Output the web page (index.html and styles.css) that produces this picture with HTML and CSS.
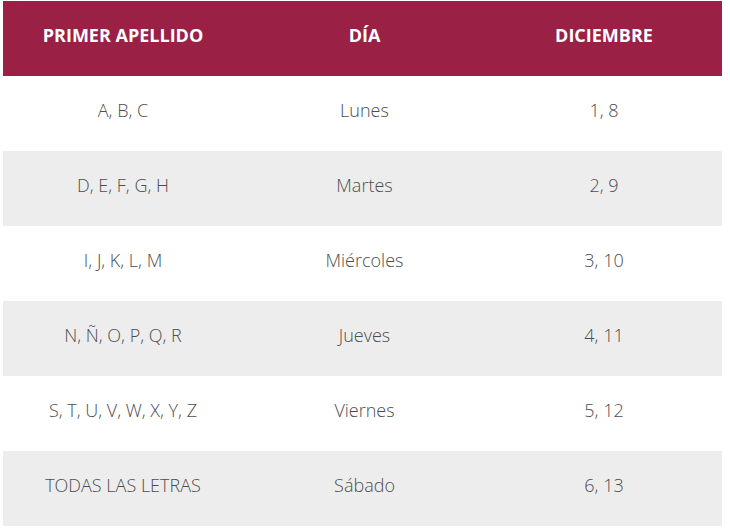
FILE: index.html
```html
<!DOCTYPE html>
<html lang="es">
<head>
<meta charset="utf-8">
<link rel="stylesheet" href="styles.css">
</head>
<body>
<div class="wrap">
<table class="tbl">
<colgroup><col class="c1"><col class="c2"><col class="c3"></colgroup>
<thead>
<tr><th>PRIMER APELLIDO</th><th>DÍA</th><th>DICIEMBRE</th></tr>
</thead>
<tbody>
<tr><td>A, B, C</td><td>Lunes</td><td>1, 8</td></tr>
<tr><td>D, E, F, G, H</td><td>Martes</td><td>2, 9</td></tr>
<tr><td>I, J, K, L, M</td><td>Miércoles</td><td>3, 10</td></tr>
<tr><td>N, Ñ, O, P, Q, R</td><td>Jueves</td><td>4, 11</td></tr>
<tr><td>S, T, U, V, W, X, Y, Z</td><td>Viernes</td><td>5, 12</td></tr>
<tr><td>TODAS LAS LETRAS</td><td>Sábado</td><td>6, 13</td></tr>
</tbody>
</table>
</div>
</body>
</html>
```
FILE: styles.css
```css
html, body { margin: 0; padding: 0; background: #fff; }
.wrap { padding: 1px 8px 0 3px; }
.tbl {
  width: 719px;
  border-collapse: collapse;
  table-layout: fixed;
  font-family: "Open Sans", sans-serif;
  font-size: 18px;
}
.c1 { width: 240px; }
.c2 { width: 243px; }
.c3 { width: 236px; }
.tbl th {
  background: #9a2145;
  color: #fff;
  font-weight: 700;
  height: 75px;
  box-sizing: border-box;
  padding: 0 0 8px;
  text-align: center;
  vertical-align: middle;
}
.tbl td {
  height: 75px;
  box-sizing: border-box;
  padding: 0 0 7px;
  text-align: center;
  vertical-align: middle;
  color: #4d4d4d;
  font-weight: 300;
}
.tbl tbody tr:nth-child(even) td { background: #ededed; }
```
